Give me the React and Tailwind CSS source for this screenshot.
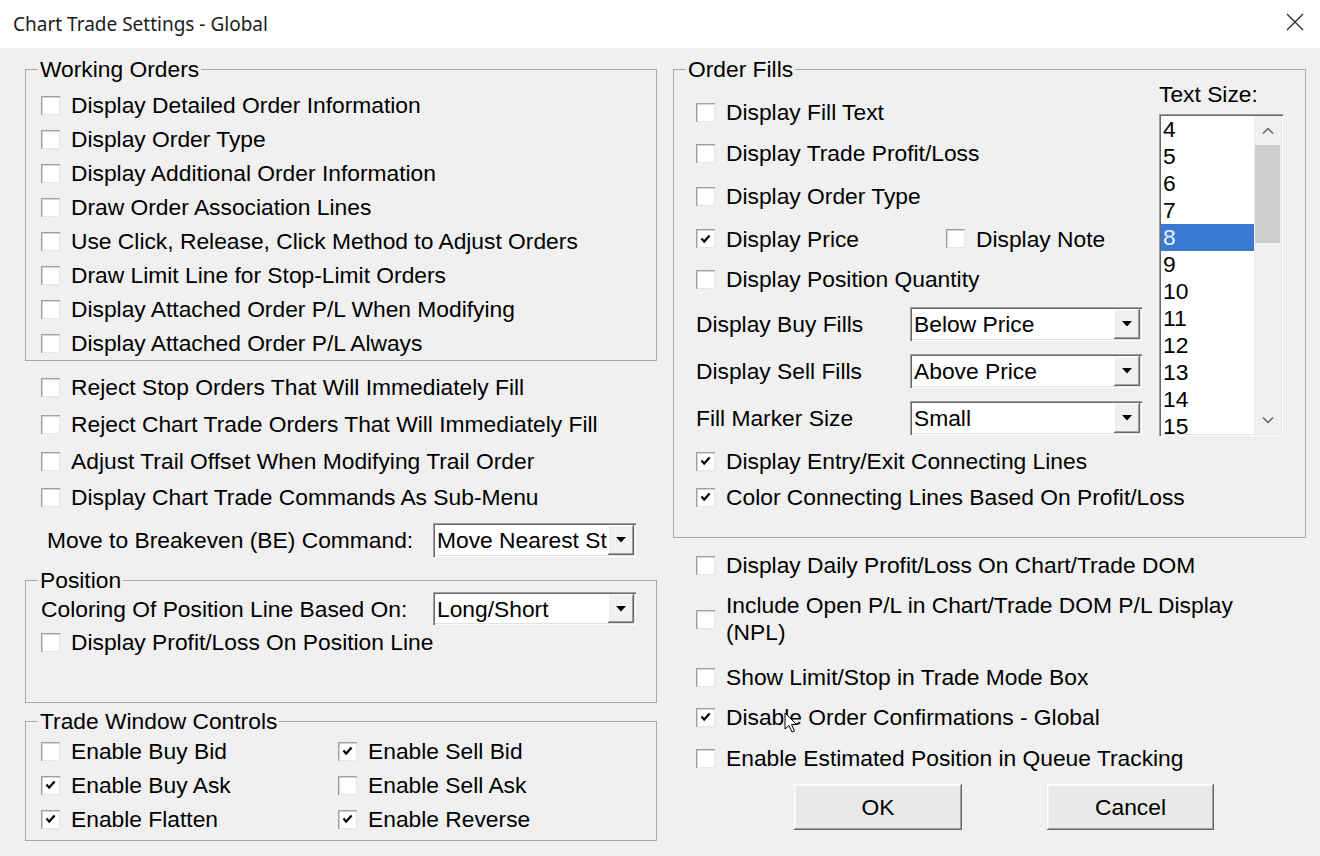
import React from 'react';

// classic win32 style check glyph
const Tick = () => (
  <svg width="11" height="10" viewBox="0 0 11 10">
    <path d="M1.5 4.5 L4.2 7.6 L9.6 1.6" fill="none" stroke="#000" strokeWidth="2.2" />
  </svg>
);

const Box = ({ on }) => (
  <span className="flex h-[19px] w-[19px] shrink-0 items-center justify-center bg-white shadow-[inset_1px_1px_0_#a0a0a0,inset_2px_2px_0_#d4d4d4,inset_-1px_-1px_0_#e6e6e6]">
    {on && <Tick />}
  </span>
);

const Check = ({ label, on, className = '' }) => (
  <div className={`flex items-center ${className}`}>
    <Box on={on} />
    <span className="ml-[11px] whitespace-nowrap">{label}</span>
  </div>
);

const Arrow = () => (
  <svg width="10" height="6" viewBox="0 0 10 6">
    <path d="M0 0 H10 L5 5.5 Z" fill="#000" />
  </svg>
);

const Combo = ({ value, className = '' }) => (
  <div className={`flex bg-white p-[2px] shadow-[inset_1px_1px_0_#a0a0a0,inset_2px_2px_0_#696969,inset_-1px_-1px_0_#ffffff,inset_-2px_-2px_0_#e3e3e3] ${className}`}>
    <div className="flex flex-1 items-center overflow-hidden whitespace-nowrap pl-[2px]">{value}</div>
    <div className="flex w-[26px] shrink-0 items-center justify-center bg-[#f0f0f0] shadow-[inset_-1px_-1px_0_#696969,inset_1px_1px_0_#ffffff,inset_-2px_-2px_0_#a0a0a0]">
      <Arrow />
    </div>
  </div>
);

const Group = ({ title, className = '', children }) => (
  <fieldset className={`border border-[#a9a9a9] ${className}`}>
    <legend className="ml-[12px] px-[2px] leading-[24px]">{title}</legend>
    {children}
  </fieldset>
);

const Button = ({ label, className = '' }) => (
  <button className={`flex h-[46px] items-center justify-center bg-[#e9e9e9] shadow-[inset_-1px_-1px_0_#696969,inset_1px_1px_0_#ffffff,inset_-2px_-2px_0_#a0a0a0,inset_2px_2px_0_#f4f4f4] ${className}`}>
    {label}
  </button>
);

const sizes = [4, 5, 6, 7, 8, 9, 10, 11, 12, 13, 14, 15];

export default function App() {
  return (
    <div className="relative h-[856px] w-[1320px] overflow-hidden bg-[#f0f0f0] font-['Liberation_Sans',Arial,sans-serif] text-[22.8px] leading-[24px] text-black">
      {/* title bar */}
      <div className="flex h-[48px] items-center justify-between bg-white pl-[13px] pr-[16px]">
        <span className="font-['Noto_Sans',sans-serif] text-[19px] text-[#1b1b1b]">Chart Trade Settings - Global</span>
        <svg width="18" height="18" viewBox="0 0 18 18" className="-mt-[4px]">
          <path d="M1 1 L17 17 M17 1 L1 17" stroke="#2b2b2b" strokeWidth="1.3" />
        </svg>
      </div>

      <div className="flex gap-[16px] pl-[25px] pt-[9px]">
        {/* left column */}
        <div className="flex w-[632px] flex-col">
          <Group title="Working Orders" className="pb-0">
            <div className="flex flex-col pl-[15px] pt-[7px]">
              <Check className="h-[34px]" label="Display Detailed Order Information" />
              <Check className="h-[34px]" label="Display Order Type" />
              <Check className="h-[34px]" label="Display Additional Order Information" />
              <Check className="h-[34px]" label="Draw Order Association Lines" />
              <Check className="h-[34px]" label="Use Click, Release, Click Method to Adjust Orders" />
              <Check className="h-[34px]" label="Draw Limit Line for Stop-Limit Orders" />
              <Check className="h-[34px]" label="Display Attached Order P/L When Modifying" />
              <Check className="h-[34px]" label="Display Attached Order P/L Always" />
            </div>
          </Group>

          <div className="mt-[8px] flex flex-col pl-[16px]">
            <Check className="h-[36px]" label="Reject Stop Orders That Will Immediately Fill" />
            <Check className="h-[38px]" label="Reject Chart Trade Orders That Will Immediately Fill" />
            <Check className="h-[36px]" label="Adjust Trail Offset When Modifying Trail Order" />
            <Check className="h-[36px]" label="Display Chart Trade Commands As Sub-Menu" />
          </div>

          <div className="mt-[8px] flex h-[34px] items-center pl-[22px]">
            <span className="w-[386px] whitespace-nowrap">Move to Breakeven (BE) Command:</span>
            <Combo value="Move Nearest St" className="h-[34px] w-[203px]" />
          </div>

          <Group title="Position" className="mt-[11px] h-[135px]">
            <div className="flex flex-col pl-[15px]">
              <div className="flex h-[33px] items-center">
                <span className="w-[392px] whitespace-nowrap">Coloring Of Position Line Based On:</span>
                <Combo value="Long/Short" className="h-[33px] w-[203px]" />
              </div>
              <Check className="h-[34px]" label="Display Profit/Loss On Position Line" />
            </div>
          </Group>

          <Group title="Trade Window Controls" className="mt-[6px] h-[132px]">
            <div className="grid grid-cols-[297px_1fr] pl-[15px] pt-[1px]">
              <Check className="h-[34px]" label="Enable Buy Bid" />
              <Check className="h-[34px]" label="Enable Sell Bid" on />
              <Check className="h-[34px]" label="Enable Buy Ask" on />
              <Check className="h-[34px]" label="Enable Sell Ask" />
              <Check className="h-[34px]" label="Enable Flatten" on />
              <Check className="h-[34px]" label="Enable Reverse" on />
            </div>
          </Group>
        </div>

        {/* right column */}
        <div className="flex w-[633px] flex-col">
          <Group title="Order Fills" className="pb-[22px]">
            <div className="flex">
              <div className="flex flex-1 flex-col pl-[22px] pt-[11px]">
                <Check className="h-[40px]" label="Display Fill Text" />
                <Check className="h-[42px]" label="Display Trade Profit/Loss" />
                <Check className="h-[44px]" label="Display Order Type" />
                <div className="flex h-[41px] items-center">
                  <div className="w-[250px]">
                    <Check label="Display Price" on />
                  </div>
                  <Check label="Display Note" />
                </div>
                <Check className="h-[40px]" label="Display Position Quantity" />

                <div className="mt-[8px] flex h-[34px] items-center">
                  <span className="w-[214px]">Display Buy Fills</span>
                  <Combo value="Below Price" className="h-[34px] w-[232px]" />
                </div>
                <div className="mt-[13px] flex h-[34px] items-center">
                  <span className="w-[214px]">Display Sell Fills</span>
                  <Combo value="Above Price" className="h-[34px] w-[232px]" />
                </div>
                <div className="mt-[13px] flex h-[34px] items-center">
                  <span className="w-[214px]">Fill Marker Size</span>
                  <Combo value="Small" className="h-[34px] w-[232px]" />
                </div>
              </div>

              <div className="mr-[22px] flex w-[124px] flex-col">
                <div className="mt-[1px] h-[24px] whitespace-nowrap">Text Size:</div>
                <div className="mt-[8px] flex h-[322px] bg-white p-[2px] shadow-[inset_1px_1px_0_#a0a0a0,inset_2px_2px_0_#696969,inset_-1px_-1px_0_#ffffff,inset_-2px_-2px_0_#e3e3e3]">
                  <div className="flex-1 overflow-hidden">
                    {sizes.map((n) => (
                      <div
                        key={n}
                        className={n === 8 ? 'h-[27px] bg-[#3a7ad5] pl-[2px] leading-[27px] text-[#eaf4ff]' : 'h-[27px] pl-[2px] leading-[27px]'}
                      >
                        {n}
                      </div>
                    ))}
                  </div>
                  <div className="flex w-[27px] flex-col bg-[#f0f0f0]">
                    <div className="flex h-[29px] items-center justify-center">
                      <svg width="12" height="8" viewBox="0 0 12 8">
                        <path d="M1 6.5 L6 1.5 L11 6.5" fill="none" stroke="#606060" strokeWidth="1.5" />
                      </svg>
                    </div>
                    <div className="mx-[1px] h-[98px] bg-[#cdcdcd]" />
                    <div className="flex-1" />
                    <div className="flex h-[29px] items-center justify-center">
                      <svg width="12" height="8" viewBox="0 0 12 8">
                        <path d="M1 1.5 L6 6.5 L11 1.5" fill="none" stroke="#606060" strokeWidth="1.5" />
                      </svg>
                    </div>
                  </div>
                </div>
              </div>
            </div>

            <div className="mt-[7px] flex flex-col pl-[22px]">
              <Check className="h-[36px]" label="Display Entry/Exit Connecting Lines" on />
              <Check className="h-[36px]" label="Color Connecting Lines Based On Profit/Loss" on />
            </div>
          </Group>

          <div className="mt-[9px] flex flex-col pl-[23px]">
            <Check className="h-[36px]" label="Display Daily Profit/Loss On Chart/Trade DOM" />
            <div className="mt-[9px] flex h-[54px] items-center">
              <Box />
              <span className="ml-[11px] leading-[27px]">
                Include Open P/L in Chart/Trade DOM P/L Display
                <br />
                (NPL)
              </span>
            </div>
            <Check className="mt-[13px] h-[36px]" label="Show Limit/Stop in Trade Mode Box" />
            <Check className="mt-[4px] h-[36px]" label="Disable Order Confirmations - Global" on />
            <Check className="mt-[5px] h-[36px]" label="Enable Estimated Position in Queue Tracking" />
          </div>

          <div className="mt-[8px] flex gap-[85px] pl-[121px]">
            <Button label="OK" className="w-[168px]" />
            <Button label="Cancel" className="w-[167px]" />
          </div>
        </div>
      </div>

      {/* mouse pointer over the dialog */}
      <svg width="14" height="22" viewBox="0 0 14 22" className="absolute left-[784px] top-[712px]">
        <path d="M1 1 L1 17 L5 13.5 L8 20 L10.5 19 L7.5 12.5 L12.5 12.5 Z" fill="#fff" stroke="#000" strokeWidth="1" strokeLinejoin="round" />
      </svg>
    </div>
  );
}
